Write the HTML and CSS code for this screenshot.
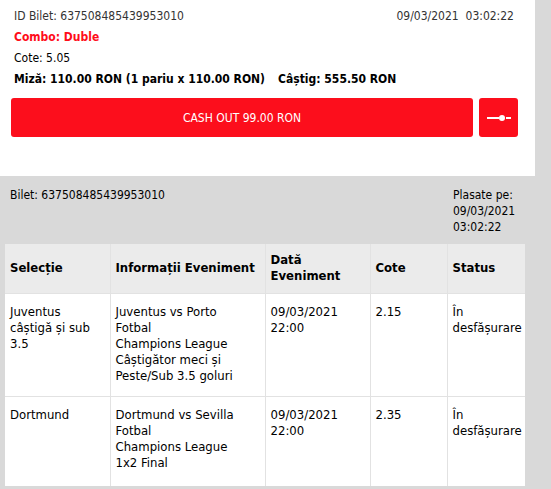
FILE: index.html
```html
<!DOCTYPE html>
<html lang="ro">
<head>
  <meta charset="UTF-8">
  <meta name="viewport" content="width=device-width, initial-scale=1.0">
  <title>Bilet 637508485439953010</title>
  <link rel="stylesheet" href="styles.css">
</head>
<body>
  <div class="ticket-card">
    <div class="ticket-top">
      <span>ID Bilet: 637508485439953010</span>
      <span>09/03/2021&nbsp;&nbsp;03:02:22</span>
    </div>
    <div class="ticket-line combo">Combo: Duble</div>
    <div class="ticket-line">Cote: 5.05</div>
    <div class="ticket-line stake">
      <span>Miză: 110.00 RON (1 pariu x 110.00 RON)</span>
      <span>Câștig: 555.50 RON</span>
    </div>

    <div class="cashout">
      <button class="btn-cashout">CASH OUT 99.00 RON</button>
      <button class="btn-slider" title="Cash out parțial">
        <svg width="24" height="8" viewBox="0 0 24 8">
          <rect x="0" y="3" width="12" height="2" fill="#fff"/>
          <circle cx="15" cy="4" r="3" fill="#fff"/>
          <rect x="19" y="3" width="5" height="2" fill="#fff"/>
        </svg>
      </button>
    </div>
  </div>

  <div class="details">
    <div class="details-head">
      <div class="details-id">Bilet: 637508485439953010</div>
      <div class="details-date">Plasate pe: 09/03/2021 03:02:22</div>
    </div>

    <table class="bets">
      <thead>
        <tr>
          <th class="c1">Selecție</th>
          <th class="c2">Informații Eveniment</th>
          <th class="c3">Dată Eveniment</th>
          <th class="c4">Cote</th>
          <th class="c5">Status</th>
        </tr>
      </thead>
      <tbody>
        <tr>
          <td>Juventus câștigă și sub 3.5</td>
          <td>Juventus vs Porto<br>Fotbal<br>Champions League<br>Câștigător meci și Peste/Sub 3.5 goluri</td>
          <td>09/03/2021 22:00</td>
          <td>2.15</td>
          <td>În desfășurare</td>
        </tr>
        <tr class="last">
          <td>Dortmund</td>
          <td>Dortmund vs Sevilla<br>Fotbal<br>Champions League<br>1x2 Final</td>
          <td>09/03/2021 22:00</td>
          <td>2.35</td>
          <td>În desfășurare</td>
        </tr>
      </tbody>
    </table>
  </div>
</body>
</html>
```

FILE: styles.css
```css
* {
  margin: 0;
  padding: 0;
  box-sizing: border-box;
}
body {
  background: #d9d9d9;
  font-family: "DejaVu Sans Condensed", "DejaVu Sans", Verdana, sans-serif;
  font-stretch: condensed;
  font-size: 12px;
  color: #000;
}

/* bilet - partea de sus */
.ticket-card {
  width: 535px;
  background: #fff;
  padding: 6px 17px 39px 11px;
}
.ticket-top {
  display: flex;
  justify-content: space-between;
  padding: 0 4px 0 3px;
  line-height: 21px;
  color: #333;
}
.ticket-line {
  padding-left: 3px;
  line-height: 21px;
}
.combo {
  color: #ff0d1a;
  font-weight: bold;
}
.stake {
  font-weight: bold;
  display: flex;
  gap: 13px;
}
.cashout {
  display: flex;
  gap: 6px;
  margin-top: 8px;
}
.cashout button {
  height: 39px;
  border: none;
  border-radius: 3px;
  background: #fc0e1c;
  color: #fff;
  font-family: inherit;
  font-stretch: condensed;
  font-size: 12px;
}
.btn-cashout {
  flex: 1;
}
.btn-slider {
  width: 39px;
  display: flex;
  align-items: center;
  justify-content: center;
}

/* detalii bilet */
.details {
  padding: 11px 26px 3px 5px;
}
.details-head {
  display: flex;
  line-height: 16px;
  margin-bottom: 9px;
}
.details-id {
  flex: 1;
  padding-left: 5px;
}
.details-date {
  width: 78px;
  padding: 0 6px;
}
.bets {
  width: 520px;
  border-collapse: collapse;
  background: #fff;
  table-layout: fixed;
  font-size: 13px;
  line-height: 16px;
}
.bets th,
.bets td {
  border: 1px solid #e2e2e2;
  text-align: left;
  vertical-align: top;
  padding: 10px 6px 12px 5px;
}
.bets tr > :first-child { border-left: none; }
.bets tr > :last-child { border-right: none; }
.bets thead th {
  background: #ebebeb;
  border-top: none;
  height: 49px;
  vertical-align: middle;
  padding-top: 8px;
  padding-bottom: 8px;
}
.bets tr.last td {
  border-bottom: none;
  padding-bottom: 15px;
}
.c1 { width: 105px; }
.c2 { width: 155px; }
.c3 { width: 105px; }
.c4 { width: 77px; }
.c5 { width: 78px; }
```
